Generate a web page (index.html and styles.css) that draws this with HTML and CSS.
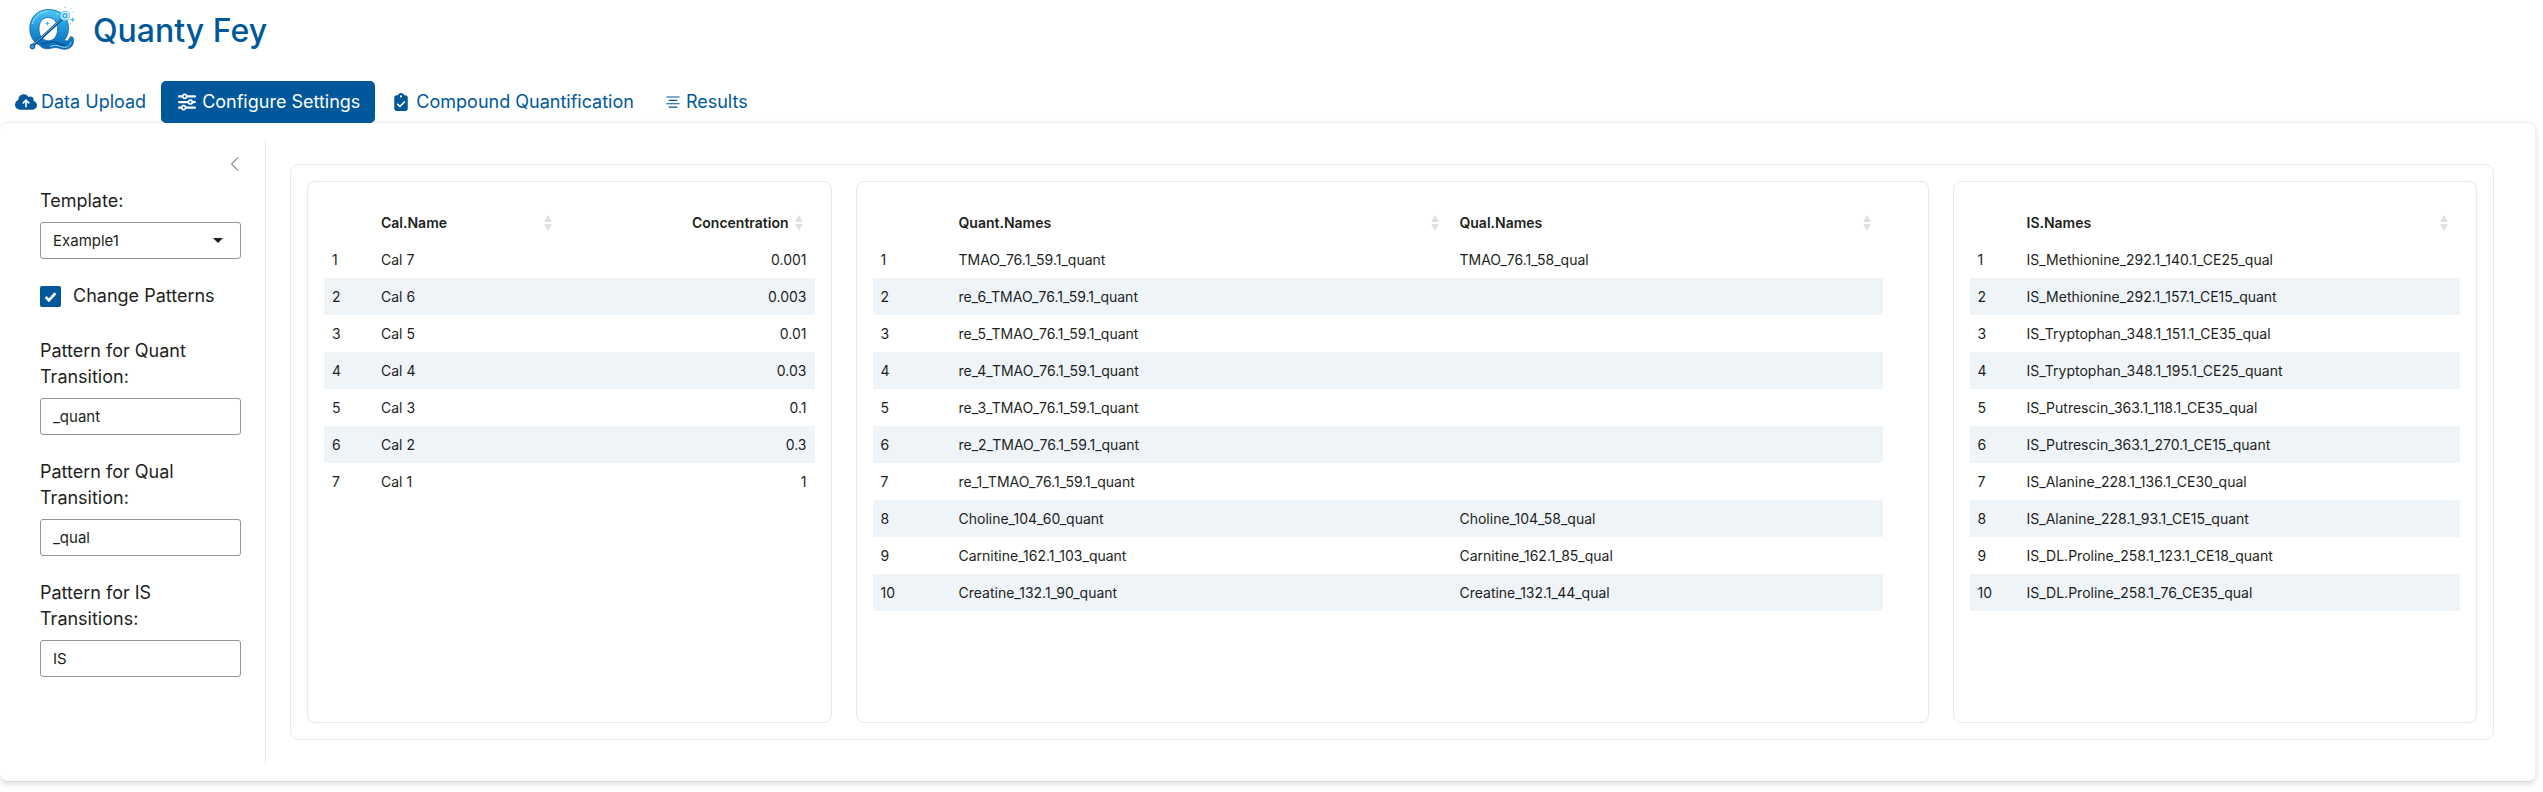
FILE: index.html
```html
<!DOCTYPE html>
<html lang="en">
<head>
<meta charset="utf-8">
<meta name="viewport" content="width=device-width, initial-scale=1">
<title>Quanty Fey</title>
<link rel="stylesheet" href="styles.css">
</head>
<body>
<header class="brand">
  <svg class="brand-logo" viewBox="28 7 48 48" aria-hidden="true">
    <defs>
      <linearGradient id="q-fill" x1="0" y1="0" x2="0" y2="1">
        <stop offset="0" stop-color="#4fc8f4"/>
        <stop offset="0.5" stop-color="#1e93d8"/>
        <stop offset="1" stop-color="#0a66b4"/>
      </linearGradient>
    </defs>
    <path fill="url(#q-fill)" stroke="#0d5fa5" stroke-width="0.8" fill-rule="evenodd" d="M48.500 9.500C37 9.500 29.800 18 29.800 28.500c0 8 3.700 14 9.700 16.600 2 3 6 4.300 10.500 3.400 3.500-.7 5-1.600 8.500-.4 6 2.200 12.500 1.500 14.600-4.500.8-2.500.9-5-.6-6.600-1.500-1-3 .2-3.300 1.700-.6 2.400-2.600 2.800-5 1.500 3-3.200 4.300-7.500 4.300-12.200C68.500 16.500 60 9.500 48.500 9.500zM48 17.500c6 0 9.600 4.800 9.600 11.500S54 40.800 48.500 40.800 39 36 39 29s3.500-11.500 9-11.500z"/>
    <path fill="none" stroke="#8fe0fb" stroke-width="1" d="M32.500 24c1.500-7 7-12.300 15-12.500M50 46.500c4-1.500 7-1.500 10.500 0 5 2 9.500.5 10.500-4.500"/>
    <path fill="none" stroke="#084b8c" stroke-width="1.200" d="M41 43.500c5 1 8-2 12-2 4 .1 7 4.500 12 3.500"/>
    <path stroke="#0b4f90" stroke-width="2.800" stroke-linecap="round" d="M33 45.500L61.500 19.500"/>
    <path stroke="#5bbfee" stroke-width="1" stroke-linecap="round" d="M33.500 44.500L61.500 19"/>
    <circle cx="32.500" cy="46.500" r="2.400" fill="#2f8fd0" stroke="#0b4f90"/>
    <circle cx="65" cy="15.700" r="5" fill="#5fcdf5"/>
    <circle cx="65" cy="15.700" r="3.300" fill="#31a5e2" stroke="#e2f8ff" stroke-width="1.100"/>
    <circle cx="65" cy="15.700" r="1.200" fill="#fff"/>
    <path fill="#3a9fd8" d="M47.500 21l.6 1.900 1.900.6-1.900.6-.6 1.900-.6-1.900-1.900-.6 1.900-.6z"/>
    <path fill="#38b4e8" d="M72.500 17l.7 2 2 .7-2 .7-.7 2-.7-2-2-.7 2-.7z"/>
    <g fill="#6ad2f4">
      <circle cx="65" cy="7.500" r=".8"/><circle cx="71" cy="8.500" r=".6"/><circle cx="73.500" cy="12" r=".7"/>
      <circle cx="60" cy="9" r=".6"/><circle cx="70.500" cy="24" r=".7"/><circle cx="57.500" cy="14" r=".7" fill="#d6f6ff"/>
    </g>
  </svg>
  <h1 class="brand-title">Quanty Fey</h1>
</header>

<nav class="tabs" aria-label="Workflow">
  <a class="tab" href="#upload">
    <svg class="tab-icon" viewBox="0 0 640 512" aria-hidden="true"><path d="M144 480C64.500 480 0 415.500 0 336c0-62.800 40.200-116.200 96.200-135.900c-.1-2.700-.2-5.400-.2-8.100c0-88.400 71.600-160 160-160c59.300 0 111 32.200 138.700 80.200C409.900 102 428.300 96 448 96c53 0 96 43 96 96c0 12.200-2.300 23.800-6.400 34.600C596 238.400 640 290.100 640 352c0 70.700-57.300 128-128 128H144zm79-217c-9.400 9.400-9.400 24.600 0 33.900s24.600 9.400 33.900 0l39-39V392c0 13.300 10.700 24 24 24s24-10.700 24-24V257.900l39 39c9.400 9.400 24.600 9.400 33.900 0s9.400-24.600 0-33.900l-80-80c-9.400-9.400-24.600-9.400-33.900 0l-80 80z"/></svg>
    <span>Data Upload</span>
  </a>
  <a class="tab tab-active" href="#settings" aria-current="page">
    <svg class="tab-icon" viewBox="0 0 512 512" aria-hidden="true"><path d="M0 416c0 17.700 14.300 32 32 32l54.700 0c12.300 28.300 40.500 48 73.300 48s61-19.700 73.300-48L480 448c17.700 0 32-14.300 32-32s-14.300-32-32-32l-246.700 0c-12.300-28.300-40.500-48-73.300-48s-61 19.700-73.300 48L32 384c-17.700 0-32 14.300-32 32zm128 0a32 32 0 1 1 64 0 32 32 0 1 1 -64 0zM320 256a32 32 0 1 1 64 0 32 32 0 1 1 -64 0zm32-80c-32.800 0-61 19.700-73.300 48L32 224c-17.700 0-32 14.300-32 32s14.300 32 32 32l246.700 0c12.300 28.300 40.500 48 73.300 48s61-19.700 73.300-48l54.700 0c17.700 0 32-14.300 32-32s-14.300-32-32-32l-54.700 0c-12.300-28.300-40.500-48-73.300-48zM192 128a32 32 0 1 1 0-64 32 32 0 1 1 0 64zm73.300-64C253 35.700 224.800 16 192 16s-61 19.700-73.300 48L32 64C14.300 64 0 78.300 0 96s14.300 32 32 32l86.700 0c12.300 28.300 40.500 48 73.300 48s61-19.700 73.300-48L480 128c17.700 0 32-14.300 32-32s-14.300-32-32-32L265.300 64z"/></svg>
    <span>Configure Settings</span>
  </a>
  <a class="tab" href="#quantification">
    <svg class="tab-icon" viewBox="0 0 384 512" aria-hidden="true"><path d="M192 0c-41.800 0-77.400 26.700-90.500 64H64C28.700 64 0 92.700 0 128V448c0 35.300 28.700 64 64 64H320c35.300 0 64-28.700 64-64V128c0-35.300-28.700-64-64-64H282.500C269.400 26.700 233.800 0 192 0zm0 64a32 32 0 1 1 0 64 32 32 0 1 1 0-64zM305 273L177 401c-9.400 9.400-24.600 9.400-33.900 0L79 337c-9.400-9.400-9.400-24.600 0-33.900s24.600-9.400 33.900 0l47 47L271 239c9.400-9.400 24.600-9.400 33.900 0s9.400 24.600 0 33.900z"/></svg>
    <span>Compound Quantification</span>
  </a>
  <a class="tab" href="#results">
    <svg class="tab-icon tab-icon-narrow" viewBox="0 0 16 16" aria-hidden="true"><path d="M4 12.500a.5.5 0 0 1 .5-.5h7a.5.5 0 0 1 0 1h-7a.5.5 0 0 1-.5-.5zm-2-3a.5.5 0 0 1 .5-.5h11a.5.5 0 0 1 0 1h-11a.5.5 0 0 1-.5-.5zm2-3a.5.5 0 0 1 .5-.5h7a.5.5 0 0 1 0 1h-7a.5.5 0 0 1-.5-.5zm-2-3a.5.5 0 0 1 .5-.5h11a.5.5 0 0 1 0 1h-11a.5.5 0 0 1-.5-.5z"/></svg>
    <span>Results</span>
  </a>
</nav>

<main class="page-card">
  <aside class="sidebar">
    <button class="collapse" type="button" aria-label="Toggle sidebar">
      <svg class="collapse-icon" viewBox="0 0 16 16" aria-hidden="true"><path d="M13 1.500L6.500 8l6.500 6.500"/></svg>
    </button>
    <form class="settings">
      <div class="field">
        <label for="template">Template:</label>
        <div class="select-wrap">
          <select class="control" id="template"><option>Example1</option></select>
          <svg class="caret" viewBox="0 0 10 5" aria-hidden="true"><path d="M0 0h10L5 5z"/></svg>
        </div>
      </div>
      <div class="check">
        <span class="check-wrap">
          <input class="check-box" type="checkbox" id="change" checked>
          <svg class="check-mark" viewBox="0 0 12 12" aria-hidden="true"><path d="M1.500 6.500l3 3L10.500 3"/></svg>
        </span>
        <label for="change">Change Patterns</label>
      </div>
      <div class="field">
        <label for="quant">Pattern for Quant Transition:</label>
        <input class="control" type="text" id="quant" value="_quant">
      </div>
      <div class="field">
        <label for="qual">Pattern for Qual Transition:</label>
        <input class="control" type="text" id="qual" value="_qual">
      </div>
      <div class="field">
        <label for="is">Pattern for IS Transitions:</label>
        <input class="control" type="text" id="is" value="IS">
      </div>
    </form>
  </aside>

  <div class="content">
    <section class="panels">
      <div class="panel">
        <table class="grid">
          <colgroup><col class="w10"><col class="w39"><col></colgroup>
          <thead><tr><th></th>
            <th scope="col"><div class="head"><span>Cal.Name</span><svg class="sort" viewBox="0 0 8 16" aria-hidden="true"><path d="M4 0l4 7H0zM4 16l4-7H0z"/></svg></div></th>
            <th scope="col"><div class="head head-end"><span>Concentration</span><svg class="sort" viewBox="0 0 8 16" aria-hidden="true"><path d="M4 0l4 7H0zM4 16l4-7H0z"/></svg></div></th></tr></thead>
          <tbody>
            <tr><td>1</td><td>Cal 7</td><td class="num">0.001</td></tr>
            <tr><td>2</td><td>Cal 6</td><td class="num">0.003</td></tr>
            <tr><td>3</td><td>Cal 5</td><td class="num">0.01</td></tr>
            <tr><td>4</td><td>Cal 4</td><td class="num">0.03</td></tr>
            <tr><td>5</td><td>Cal 3</td><td class="num">0.1</td></tr>
            <tr><td>6</td><td>Cal 2</td><td class="num">0.3</td></tr>
            <tr><td>7</td><td>Cal 1</td><td class="num">1</td></tr>
          </tbody>
        </table>
      </div>
      <div class="panel panel-wide">
        <table class="grid">
          <colgroup><col class="w8"><col class="w50"><col></colgroup>
          <thead><tr><th></th>
            <th scope="col"><div class="head"><span>Quant.Names</span><svg class="sort" viewBox="0 0 8 16" aria-hidden="true"><path d="M4 0l4 7H0zM4 16l4-7H0z"/></svg></div></th>
            <th scope="col"><div class="head"><span>Qual.Names</span><svg class="sort" viewBox="0 0 8 16" aria-hidden="true"><path d="M4 0l4 7H0zM4 16l4-7H0z"/></svg></div></th></tr></thead>
          <tbody>
            <tr><td>1</td><td>TMAO_76.1_59.1_quant</td><td>TMAO_76.1_58_qual</td></tr>
            <tr><td>2</td><td>re_6_TMAO_76.1_59.1_quant</td><td></td></tr>
            <tr><td>3</td><td>re_5_TMAO_76.1_59.1_quant</td><td></td></tr>
            <tr><td>4</td><td>re_4_TMAO_76.1_59.1_quant</td><td></td></tr>
            <tr><td>5</td><td>re_3_TMAO_76.1_59.1_quant</td><td></td></tr>
            <tr><td>6</td><td>re_2_TMAO_76.1_59.1_quant</td><td></td></tr>
            <tr><td>7</td><td>re_1_TMAO_76.1_59.1_quant</td><td></td></tr>
            <tr><td>8</td><td>Choline_104_60_quant</td><td>Choline_104_58_qual</td></tr>
            <tr><td>9</td><td>Carnitine_162.1_103_quant</td><td>Carnitine_162.1_85_qual</td></tr>
            <tr><td>10</td><td>Creatine_132.1_90_quant</td><td>Creatine_132.1_44_qual</td></tr>
          </tbody>
        </table>
      </div>
      <div class="panel">
        <table class="grid">
          <colgroup><col class="w10"><col></colgroup>
          <thead><tr><th></th>
            <th scope="col"><div class="head"><span>IS.Names</span><svg class="sort" viewBox="0 0 8 16" aria-hidden="true"><path d="M4 0l4 7H0zM4 16l4-7H0z"/></svg></div></th></tr></thead>
          <tbody>
            <tr><td>1</td><td>IS_Methionine_292.1_140.1_CE25_qual</td></tr>
            <tr><td>2</td><td>IS_Methionine_292.1_157.1_CE15_quant</td></tr>
            <tr><td>3</td><td>IS_Tryptophan_348.1_151.1_CE35_qual</td></tr>
            <tr><td>4</td><td>IS_Tryptophan_348.1_195.1_CE25_quant</td></tr>
            <tr><td>5</td><td>IS_Putrescin_363.1_118.1_CE35_qual</td></tr>
            <tr><td>6</td><td>IS_Putrescin_363.1_270.1_CE15_quant</td></tr>
            <tr><td>7</td><td>IS_Alanine_228.1_136.1_CE30_qual</td></tr>
            <tr><td>8</td><td>IS_Alanine_228.1_93.1_CE15_quant</td></tr>
            <tr><td>9</td><td>IS_DL.Proline_258.1_123.1_CE18_quant</td></tr>
            <tr><td>10</td><td>IS_DL.Proline_258.1_76_CE35_qual</td></tr>
          </tbody>
        </table>
      </div>
    </section>
  </div>
</main>
</body>
</html>
```

FILE: styles.css
```css
:root {
  --blue: #00589b;
  --ink: #1d1f21;
  --line: #e8e9ea;
}

*, *::before, *::after { box-sizing: border-box; }

body {
  margin: 0;
  min-height: 100vh;
  display: flex;
  flex-direction: column;
  padding: 0 7px 10px 0;
  background: #fff;
  color: var(--ink);
  font: 18px/26px Inter, "Liberation Sans", sans-serif;
}

.brand {
  display: flex;
  align-items: center;
  gap: 17px;
  height: 62px;
  padding: 0 28px;
}

.brand-logo { width: 48px; height: 48px; overflow: visible; }

.brand-title {
  margin: 0;
  color: var(--blue);
  font-size: 32px;
  font-weight: 500;
  line-height: 40px;
}

.tabs { display: flex; margin: 19px 0 -1px; }

.tab {
  position: relative;
  display: flex;
  align-items: center;
  gap: 4px;
  padding: 8px 15px;
  border-radius: 5px;
  color: var(--blue);
  text-decoration: none;
}

.tab-active { background: var(--blue); color: #fff; }

.tab-icon { width: 22px; height: 18px; fill: currentColor; }
.tab-icon-narrow { width: 18px; }

.page-card {
  flex: 1;
  display: flex;
  padding: 17px 17px 17px 16px;
  border: 1px solid #eeeff0;
  border-left: 0;
  border-bottom-color: #d8d9da;
  border-radius: 8px;
  box-shadow: 0 2px 5px rgba(0, 0, 0, 0.14);
}

.sidebar {
  flex: none;
  width: 250px;
  padding: 16px 24px;
  border-right: 1px solid var(--line);
}

.collapse {
  display: block;
  margin: 0 0 0 auto;
  padding: 0;
  border: 0;
  background: none;
  color: #444;
}

.collapse-icon {
  display: block;
  width: 16px;
  height: 16px;
  fill: none;
  stroke: currentColor;
}

.settings { display: flex; flex-direction: column; gap: 24px; margin-top: 16px; }

.field { display: flex; flex-direction: column; gap: 8px; }

.control {
  display: block;
  width: 100%;
  height: 37px;
  margin: 0;
  padding: 0 12px;
  appearance: none;
  border: 1px solid #8d959e;
  border-radius: 3px;
  background: #fff;
  color: var(--ink);
  font: inherit;
  font-size: 15px;
}

.select-wrap { position: relative; }

.caret {
  position: absolute;
  top: 16px;
  right: 18px;
  width: 10px;
  height: 5px;
  fill: var(--ink);
  pointer-events: none;
}

.check { display: flex; align-items: center; gap: 12px; margin-bottom: 5px; }

.check-wrap { position: relative; display: block; width: 21px; height: 21px; }

.check-box {
  display: block;
  width: 21px;
  height: 21px;
  margin: 0;
  appearance: none;
  border-radius: 2px;
  background: var(--blue);
}

.check-mark {
  position: absolute;
  inset: 4px;
  width: 13px;
  height: 13px;
  fill: none;
  stroke: #fff;
  stroke-width: 2.400;
  pointer-events: none;
}

.content { flex: 1; display: flex; min-width: 0; padding: 24px; }

.panels {
  flex: 1;
  display: grid;
  grid-template-columns: repeat(12, minmax(0, 1fr));
  gap: 24px;
  padding: 16px;
  border: 1px solid var(--line);
  border-radius: 8px;
}

.panel {
  grid-column: span 3;
  padding: 22px 16px;
  border: 1px solid var(--line);
  border-radius: 8px;
}

.panel-wide { grid-column: span 6; padding-right: 45px; }

.grid {
  width: 100%;
  table-layout: fixed;
  border-collapse: collapse;
  font-size: 14px;
  line-height: 21px;
}

.w8 { width: 78px; }
.w10 { width: 49px; }
.w39 { width: 39%; }
.w50 { width: 49.6%; }

.grid th, .grid td { height: 37px; padding: 8px; text-align: left; }
.grid th { font-weight: 600; }
.grid .num { text-align: right; }
.grid tbody tr:nth-child(even) { background: #eff4f9; }

.head { display: flex; align-items: center; justify-content: space-between; padding-right: 4px; }
.head-end { justify-content: flex-end; gap: 6px; }

.sort { flex: none; width: 8px; height: 16px; fill: #dfe0e1; }
```
